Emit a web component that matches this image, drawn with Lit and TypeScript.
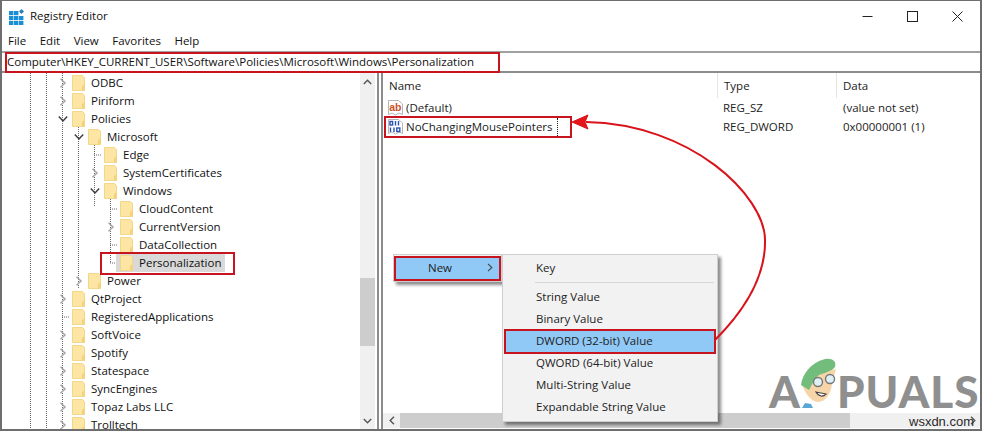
import { LitElement, html, css, svg } from "lit";
import { customElement } from "lit/decorators.js";

const tree: [string, number, string][] = [
  ["ODBC", 0, "r"], ["Piriform", 0, "r"], ["Policies", 0, "d"], ["Microsoft", 1, "d"],
  ["Edge", 2, ""], ["SystemCertificates", 2, "r"], ["Windows", 2, "d"], ["CloudContent", 3, ""],
  ["CurrentVersion", 3, "r"], ["DataCollection", 3, ""], ["Personalization", 3, ""], ["Power", 1, "r"],
  ["QtProject", 0, "r"], ["RegisteredApplications", 0, ""], ["SoftVoice", 0, "r"], ["Spotify", 0, "r"],
  ["Statespace", 0, "r"], ["SyncEngines", 0, "r"], ["Topaz Labs LLC", 0, "r"], ["Trolltech", 0, "r"],
];

const folder = svg`<svg class="folder" width="13" height="16" viewBox="0 0 13 16">
  <path d="M.5 .5H10.5L12.5 2.5V15.5H.5Z" fill="#fde6a4" stroke="#f3d687"/>
  <path d="M10 11 12.5 9V15.5H10Z" fill="#f5d27a"/>
</svg>`;

const chevronR = svg`<svg width="8" height="10" viewBox="0 0 8 10"><path d="M1.5 .8 6 5 1.5 9.2" fill="none" stroke="#a6a6a6" stroke-width="1.5"/></svg>`;
const chevronD = svg`<svg width="10" height="8" viewBox="0 0 10 8"><path d="M.8 1.5 5 6 9.2 1.5" fill="none" stroke="#404040" stroke-width="1.5"/></svg>`;

@customElement("tree-pane")
class TreePane extends LitElement {
  static styles = css`
    :host { display: flex; flex: 0 0 374px; height: 100%; position: relative; overflow: hidden; background: #fff; }
    .rows { flex: 1; padding-top: 1px; overflow: hidden; }
    .row { display: flex; align-items: center; height: 18px; position: relative; }
    .tw { width: 13px; display: flex; justify-content: center; flex: none; margin-right: 3px; }
    .item { display: flex; align-items: center; height: 18px; }
    .item.sel { background: #d9d9d9; margin-left: -4px; padding-left: 4px; padding-right: 4px; }
    .folder { flex: none; margin-right: 6px; }
    .name { font-size: 11.5px; line-height: 18px; white-space: nowrap; color: #111; }
    .guides { position: absolute; left: 0; top: 0; width: 360px; height: 360px; pointer-events: none; }
    .sb { width: 15px; flex: none; background: #f0f0f0; margin-right: 1px; display: flex; flex-direction: column; align-items: center; justify-content: space-between; position: relative; }
    .thumb { position: absolute; left: 0; right: 0; top: 205px; height: 68px; background: #cdcdcd; }
    .arr { height: 17px; display: flex; align-items: center; position: relative; }
  `;
  render() {
    return html`
      <svg class="guides" viewBox="0 0 360 360" fill="none" stroke="#666" stroke-dasharray="1 1">
        <path d="M28.5 0V356M44.5 0V356M60.5 0V356M76.5 54V215M92.5 72V133M108.5 126V190"/>
        <path d="M60 244H68M92 82H100M108 136H116M108 172H116M108 190H116"/>
      </svg>
      <div class="rows">
        ${tree.map(([name, lvl, kind]) => html`
          <div class="row" style="padding-left:${54 + lvl * 16}px">
            <span class="tw">${kind === "r" ? chevronR : kind === "d" ? chevronD : ""}</span>
            <span class="item ${name === "Personalization" ? "sel" : ""}">${folder}<span class="name">${name}</span></span>
          </div>`)}
      </div>
      <div class="sb">
        <div class="thumb"></div>
        <div class="arr"><svg width="9" height="6" viewBox="0 0 9 6"><path d="M.8 5 4.5 1.2 8.2 5" fill="none" stroke="#555" stroke-width="1.4"/></svg></div>
        <div class="arr"><svg width="9" height="6" viewBox="0 0 9 6"><path d="M.8 1 4.5 4.8 8.2 1" fill="none" stroke="#555" stroke-width="1.4"/></svg></div>
      </div>`;
  }
}

const iconAb = svg`<svg width="15" height="16" viewBox="0 0 15 16">
  <path d="M.5 .5H10.5L14.5 4V14.5L11 13 7.5 15 4 13 .5 14.5Z" fill="#fff" stroke="#b5b5b5"/>
  <text x="1.2" y="10.5" font-family="Liberation Sans, sans-serif" font-weight="700" font-size="10.5" fill="#c9532b">ab</text>
</svg>`;
const iconBin = svg`<svg width="15" height="16" viewBox="0 0 15 16">
  <path d="M.5 .5H10.5L14.5 4V14.5L11 13 7.5 15 4 13 .5 14.5Z" fill="#fff" stroke="#b5b5b5"/>
  <g fill="none" stroke="#2b4fb5" stroke-width="1.4">
    <rect x="2" y="2.5" width="2.6" height="3.5"/><path d="M7.5 2V6.5M10.5 2V6.5"/>
    <path d="M2.5 8.5V13M6 8.5V13"/><rect x="8.8" y="9" width="3" height="3.5"/>
  </g>
</svg>`;

@customElement("app-root")
class AppRoot extends LitElement {
  static styles = css`
    :host { display: block; width: 982px; height: 431px; font-family: "Open Sans", "Noto Sans", sans-serif; color: #111; background: #fff; }
    .win { position: relative; box-sizing: border-box; width: 982px; height: 431px; border: solid #6e6e6e; border-width: 1px 2px 2px 2px; display: flex; flex-direction: column; overflow: hidden; background: #fff; }
    .title { height: 32px; display: flex; align-items: center; flex: none; font-size: 11.5px; padding-left: 7px; box-sizing: border-box; }
    .title .ttl { margin-left: 6px; padding-bottom: 4px; }
    .ctl { margin-left: auto; display: flex; height: 100%; }
    .ctl span { width: 45px; display: flex; align-items: center; justify-content: center; padding-bottom: 2px; }
    .menu { height: 18px; display: flex; flex: none; font-size: 11.5px; line-height: 15px; padding-left: 6px; gap: 13.5px; box-sizing: border-box; }
    .addr { height: 22px; flex: none; box-sizing: border-box; border-top: 2px solid #a0a0a0; border-bottom: 2px solid #8c8c8c; font-size: 11.5px; line-height: 18px; padding-left: 5px; white-space: nowrap; }
    .main { flex: 1; display: flex; min-height: 0; }
    .split { width: 6px; flex: none; box-sizing: border-box; border: solid #8c8c8c; border-width: 0 2px; background: #fff; margin-left: 1px; }
    .right { flex: 1; min-width: 0; display: flex; flex-direction: column; position: relative; background: #fff; }
    .hdr { height: 24px; flex: none; display: grid; grid-template-columns: 334px 119px 1fr; font-size: 11.5px; line-height: 25px; color: #222; }
    .hdr span { padding-left: 6px; border-left: 1px solid #e5e5e5; }
    .hdr span:first-child { border-left: 0; }
    .list { flex: 1; font-size: 11.5px; padding-top: 1px; }
    .vrow { display: grid; grid-template-columns: 334px 120px 1fr; height: 19px; align-items: center; line-height: 18px; color: #222; }
    .vrow > span { padding-left: 6px; }
    .vrow > .vname { display: flex; align-items: center; gap: 3px; padding-left: 5px; }
    .hs { height: 15px; flex: none; background: #f0f0f0; display: flex; margin-bottom: 1px; align-items: center; }
    .hs .l { width: 17px; display: flex; justify-content: center; flex: none; }
    .hs .th { width: 450px; align-self: stretch; background: #cdcdcd; flex: none; }
    .hs .r { margin-left: auto; width: 15px; display: flex; justify-content: center; }
    .focus { border-right: 1px dotted #222; padding-right: 4px; }
    .box { position: absolute; box-sizing: border-box; border: 2px solid #c8141e; pointer-events: none; z-index: 5; }
    .b-addr { left: 3px; top: 51px; width: 495px; height: 21px; }
    .b-tree { left: 98px; top: 251px; width: 135px; height: 23px; }
    .b-val { left: 382px; top: 115px; width: 188px; height: 22px; }
    .b-new { left: 392px; top: 255px; width: 107px; height: 25px; }
    .b-dw { left: 502px; top: 328px; width: 212px; height: 25px; }
    .menu1, .menu2 { position: absolute; box-sizing: border-box; background: #f2f2f2; border: 1px solid #cfcfcf; box-shadow: 3px 3px 3px rgba(0,0,0,.45); font-size: 11.5px; color: #222; z-index: 3; }
    .menu1 { left: 391px; top: 253px; width: 109px; height: 28px; padding: 2px; }
    .menu1 .it { height: 22px; background: #90c8f6; display: flex; align-items: center; line-height: 22px; padding-left: 32px; position: relative; }
    .menu1 svg { position: absolute; right: 6px; top: 6px; }
    .menu2 { left: 500px; top: 253px; width: 216px; height: 168px; padding: 2px 3px; }
    .m { height: 22px; line-height: 22px; padding-left: 30px; white-space: nowrap; }
    .m.on { background: #90c8f6; }
    .sep { height: 7px; box-sizing: border-box; margin: 0 0 0 29px; padding-top: 3px; }
    .sep i { display: block; border-top: 1px solid #d7d7d7; }
    .arrow { position: absolute; left: 0; top: 0; z-index: 6; pointer-events: none; }
    .wm { position: absolute; left: 767px; top: 369px; z-index: 1; width: 213px; height: 42px; pointer-events: none; font-family: "Lato", sans-serif; font-weight: 900; font-size: 44px; color: #8f8f8f; line-height: 42px; display: flex; letter-spacing: 1px; }
    .wm .gap { width: 36px; flex: none; }
    .mascot { position: absolute; left: 793px; top: 355px; z-index: 2; }
    .site { position: absolute; left: 907px; top: 412px; z-index: 7; font-family: "Liberation Sans", sans-serif; font-size: 13px; line-height: 17px; color: #2a2a2a; }
  `;
  render() {
    return html`
      <div class="win">
        <div class="title">
          <svg width="15" height="16" viewBox="0 0 15 16">
            <g fill="#1b8ed6">
              <rect x="0" y="2" width="4.4" height="4.2"/><rect x="5" y="2" width="4.4" height="4.2"/>
              <rect x="0" y="7" width="4.4" height="4.2"/><rect x="5" y="7" width="4.4" height="4.2"/><rect x="10" y="7" width="4.4" height="4.2"/>
              <rect x="0" y="12" width="4.4" height="4"/><rect x="5" y="12" width="4.4" height="4"/><rect x="10" y="12" width="4.4" height="4"/>
            </g>
            <path d="M12.5 0 15 2.5 12.5 5 10 2.5Z" fill="#2a7fb8"/>
          </svg>
          <span class="ttl">Registry Editor</span>
          <div class="ctl">
            <span><svg width="11" height="11" viewBox="0 0 11 11"><path d="M.5 5.5H10.5" stroke="#222"/></svg></span>
            <span><svg width="11" height="11" viewBox="0 0 11 11"><rect x=".5" y=".5" width="10" height="10" fill="none" stroke="#222"/></svg></span>
            <span><svg width="11" height="11" viewBox="0 0 11 11"><path d="M.5 .5 10.5 10.5M10.5 .5 .5 10.5" stroke="#222" fill="none"/></svg></span>
          </div>
        </div>
        <div class="menu"><span>File</span><span>Edit</span><span>View</span><span>Favorites</span><span>Help</span></div>
        <div class="addr">Computer\\HKEY_CURRENT_USER\\Software\\Policies\\Microsoft\\Windows\\Personalization</div>
        <div class="main">
          <tree-pane></tree-pane>
          <div class="split"></div>
          <div class="right">
            <div class="hdr"><span>Name</span><span>Type</span><span>Data</span></div>
            <div class="list">
              <div class="vrow"><span class="vname">${iconAb}<span>(Default)</span></span><span>REG_SZ</span><span>(value not set)</span></div>
              <div class="vrow"><span class="vname">${iconBin}<span class="focus">NoChangingMousePointers</span></span><span>REG_DWORD</span><span>0x00000001 (1)</span></div>
            </div>
            <div class="hs">
              <span class="l"><svg width="6" height="9" viewBox="0 0 6 9"><path d="M5 .8 1.2 4.5 5 8.2" fill="none" stroke="#555" stroke-width="1.4"/></svg></span>
              <span class="th"></span>
              <span class="r"><svg width="6" height="9" viewBox="0 0 6 9"><path d="M1 .8 4.8 4.5 1 8.2" fill="none" stroke="#555" stroke-width="1.4"/></svg></span>
            </div>
          </div>
        </div>

        <div class="wm"><span>A</span><span class="gap"></span><span>PUALS</span></div>
        <svg class="mascot" width="44" height="54" viewBox="793 355 44 54">
          <path d="M800 384C804 394 810 401 816 401 824 401 829 392 830 383L834 368 812 372Z" fill="#f6d5a8"/>
          <path d="M799 384C800 374 808 362 823 358 830 357 835 360 833 366 830 370 822 372 817 374 812 378 810 384 807 389Z" fill="#72bd7c"/>
          <g fill="#dff1f7" stroke="#777" stroke-width="1.4"><circle cx="816" cy="381" r="4.5"/><circle cx="828" cy="378" r="4.5"/></g>
          <path d="M814 391C817 396 821 396 824 393Z" fill="#fff" stroke="#444" stroke-width="1.2"/>
          <path d="M800 407 803 402 809 403 811 407Z" fill="#5aa6d6"/>
        </svg>
        <div class="site">wsxdn.com</div>

        <div class="menu1"><div class="it">New<svg width="6" height="9" viewBox="0 0 6 9"><path d="M1 .8 4.8 4.5 1 8.2" fill="none" stroke="#444" stroke-width="1.1"/></svg></div></div>
        <div class="menu2">
          <div class="m">Key</div>
          <div class="sep"><i></i></div>
          <div class="m">String Value</div>
          <div class="m">Binary Value</div>
          <div class="m on">DWORD (32-bit) Value</div>
          <div class="m">QWORD (64-bit) Value</div>
          <div class="m">Multi-String Value</div>
          <div class="m">Expandable String Value</div>
        </div>

        <div class="box b-addr"></div>
        <div class="box b-tree"></div>
        <div class="box b-val"></div>
        <div class="box b-new"></div>
        <div class="box b-dw"></div>

        <svg class="arrow" width="978" height="428" viewBox="0 0 978 428">
          <path d="M713 339C748 304 764 270 763 238 762 195 690 123 584 121" fill="none" stroke="#d8131b" stroke-width="2"/>
          <path d="M570 121 586 114 583 121 586 128Z" fill="#e8141c" stroke="#d8131b"/>
        </svg>
      </div>`;
  }
}
